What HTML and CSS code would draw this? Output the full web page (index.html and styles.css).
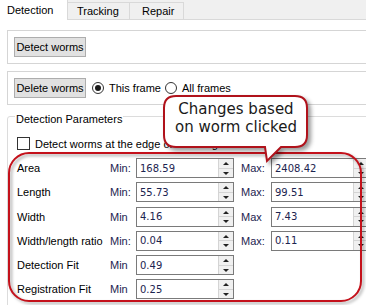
FILE: index.html
```html
<!DOCTYPE html>
<html lang="en">
<head>
    <meta charset="UTF-8">
    <title>Detection</title>
    <link rel="stylesheet" href="styles.css">
</head>
<body>
    <div class="tabs">
        <div class="tab active">Detection</div>
        <div class="tab tracking">Tracking</div>
        <div class="tab repair">Repair</div>
        <div class="tab-fill"></div>
    </div>

    <div class="pane">
        <div class="frame">
            <button class="btn">Detect worms</button>
        </div>

        <div class="frame frame-row">
            <button class="btn">Delete worms</button>
            <span class="radio checked"></span><span class="radio-label">This frame</span>
            <span class="radio"></span><span class="radio-label">All frames</span>
        </div>

        <fieldset class="group">
            <legend>Detection Parameters</legend>
            <div class="check-row">
                <span class="checkbox"></span>
                <span>Detect worms at the edge of the image</span>
            </div>

            <div class="params">
                <span class="p-label">Area</span>
                <span class="mm">Min:</span>
                <div class="spin"><span class="val">168.59</span><span class="arrows"><i class="up"></i><i class="down"></i></span></div>
                <span class="mm max">Max:</span>
                <div class="spin"><span class="val">2408.42</span><span class="arrows"><i class="up"></i><i class="down"></i></span></div>

                <span class="p-label">Length</span>
                <span class="mm">Min:</span>
                <div class="spin"><span class="val">55.73</span><span class="arrows"><i class="up"></i><i class="down"></i></span></div>
                <span class="mm max">Max:</span>
                <div class="spin"><span class="val">99.51</span><span class="arrows"><i class="up"></i><i class="down"></i></span></div>

                <span class="p-label">Width</span>
                <span class="mm">Min</span>
                <div class="spin"><span class="val">4.16</span><span class="arrows"><i class="up"></i><i class="down"></i></span></div>
                <span class="mm max">Max</span>
                <div class="spin"><span class="val">7.43</span><span class="arrows"><i class="up"></i><i class="down"></i></span></div>

                <span class="p-label">Width/length ratio</span>
                <span class="mm">Min:</span>
                <div class="spin"><span class="val">0.04</span><span class="arrows"><i class="up"></i><i class="down"></i></span></div>
                <span class="mm max">Max:</span>
                <div class="spin"><span class="val">0.11</span><span class="arrows"><i class="up"></i><i class="down"></i></span></div>

                <span class="p-label">Detection Fit</span>
                <span class="mm">Min</span>
                <div class="spin"><span class="val">0.49</span><span class="arrows"><i class="up"></i><i class="down"></i></span></div>
                <span></span><span></span>

                <span class="p-label">Registration Fit</span>
                <span class="mm">Min</span>
                <div class="spin"><span class="val">0.25</span><span class="arrows"><i class="up"></i><i class="down"></i></span></div>
                <span></span><span></span>
            </div>
        </fieldset>
    </div>

    <!-- annotation drawn over the dialog -->
    <svg class="annot" width="366" height="305" viewBox="0 0 366 305">
        <rect class="highlight" x="9" y="153" width="352" height="148" rx="20" ry="20"/>
        <path class="bubble" d="M176,96 H295 Q307,96 307,108 V135 Q307,147 295,147 H281 L267,161 L265,147 H176 Q164,147 164,135 V108 Q164,96 176,96 Z"/>
        <text class="bubble-text" x="236" y="114">Changes based</text>
        <text class="bubble-text" x="236" y="132">on worm clicked</text>
    </svg>
</body>
</html>
```

FILE: styles.css
```css
* {
    box-sizing: border-box;
}

body {
    margin: 0;
    width: 366px;
    height: 305px;
    overflow: hidden;
    position: relative;
    background: #fff;
    font-family: 'Liberation Sans', Arial, sans-serif;
    font-size: 11px;
    color: #000;
    white-space: nowrap;
}

/* Tab bar */
.tabs {
    display: flex;
    height: 20px;
    background: #f0f0f0;
}

.tab {
    height: 18px;
    margin-top: 2px;
    line-height: 16px;
    background: #f0f0f0;
    border-top: 1px solid #d9d9d9;
    border-right: 1px solid #d9d9d9;
    border-bottom: 1px solid #d9d9d9;
}

.tab.active {
    width: 68px;
    height: 20px;
    margin-top: 0;
    line-height: 20px;
    padding-left: 7px;
    background: #fff;
    border-top: none;
    border-bottom: none;
}

.tab.tracking {
    width: 62px;
    padding-left: 9px;
}

.tab.repair {
    width: 54px;
    padding-left: 12px;
}

.tab-fill {
    flex: 1;
    border-bottom: 1px solid #d9d9d9;
}

/* Pane */
.pane {
    padding: 10px 0 0 7px;
}

.frame {
    margin-right: -20px;
    height: 34px;
    border: 1px solid #d5d5d5;
    padding: 0 6px;
    display: flex;
    align-items: center;
}

.frame + .frame {
    margin-top: 7px;
}

.btn {
    width: 72px;
    height: 20px;
    padding: 0;
    margin: 0;
    font-family: inherit;
    font-size: 11px;
    color: #000;
    background: #e1e1e1;
    border: 1px solid #adadad;
    white-space: nowrap;
}

.radio {
    width: 12px;
    height: 12px;
    border: 1px solid #333;
    border-radius: 50%;
    margin-left: 6px;
    margin-right: 5px;
    display: flex;
    align-items: center;
    justify-content: center;
}

.radio.checked::after {
    content: '';
    width: 6px;
    height: 6px;
    border-radius: 50%;
    background: #1a1a1a;
}

.radio-label + .radio {
    margin-left: 4px;
}

/* Group box */
.group {
    margin: 0 -20px 0 0;
    padding: 0 0 0 9px;
    border: 1px solid #dcdcdc;
    border-radius: 3px;
    height: 220px;
}

.group legend {
    padding: 6px 1px 0;
    margin-left: -2px;
    line-height: 16px;
}

.check-row {
    display: flex;
    align-items: center;
    gap: 5px;
    margin-top: 10px;
    height: 13px;
}

.checkbox {
    width: 13px;
    height: 13px;
    border: 1px solid #333;
    background: #fff;
}

.params {
    display: grid;
    grid-template-columns: 93px 26px 98px 37px 98px;
    grid-auto-rows: 20px;
    row-gap: 4.3px;
    margin-top: 8px;
    align-items: center;
}

.mm {
    color: #1c2450;
}

.mm.max {
    padding-left: 7px;
}

.spin {
    height: 20px;
    border: 1px solid #7a7a7a;
    display: flex;
    align-items: center;
    background: #fff;
}

.val {
    flex: 1;
    padding-left: 3px;
    font-family: 'DejaVu Sans', sans-serif;
    font-size: 10px;
    color: #1c2450;
}

.arrows {
    width: 15px;
    height: 18px;
    display: flex;
    flex-direction: column;
    border-left: 1px solid #d4d4d4;
}

.arrows i {
    flex: 1;
    background: #f0f0f0;
    border-bottom: 1px solid #d4d4d4;
    position: relative;
}

.arrows i:last-child {
    border-bottom: none;
}

.arrows i::after {
    content: '';
    position: absolute;
    left: 4px;
    top: 3px;
    border-left: 3px solid transparent;
    border-right: 3px solid transparent;
}

.arrows .up::after {
    border-bottom: 3px solid #222;
}

.arrows .down::after {
    border-top: 3px solid #222;
}

/* Annotation overlay */
.annot {
    position: absolute;
    left: 0;
    top: 0;
    pointer-events: none;
}

.highlight {
    fill: none;
    stroke: #c4111b;
    stroke-width: 2;
    filter: drop-shadow(2px 2px 1.5px rgba(0, 0, 0, 0.35));
}

.bubble {
    fill: #fff;
    stroke: #b0121b;
    stroke-width: 2;
    filter: drop-shadow(3px 3px 2px rgba(0, 0, 0, 0.4));
}

.bubble-text {
    font-family: 'DejaVu Sans', sans-serif;
    font-size: 15px;
    fill: #1a1a1a;
    text-anchor: middle;
}
```
